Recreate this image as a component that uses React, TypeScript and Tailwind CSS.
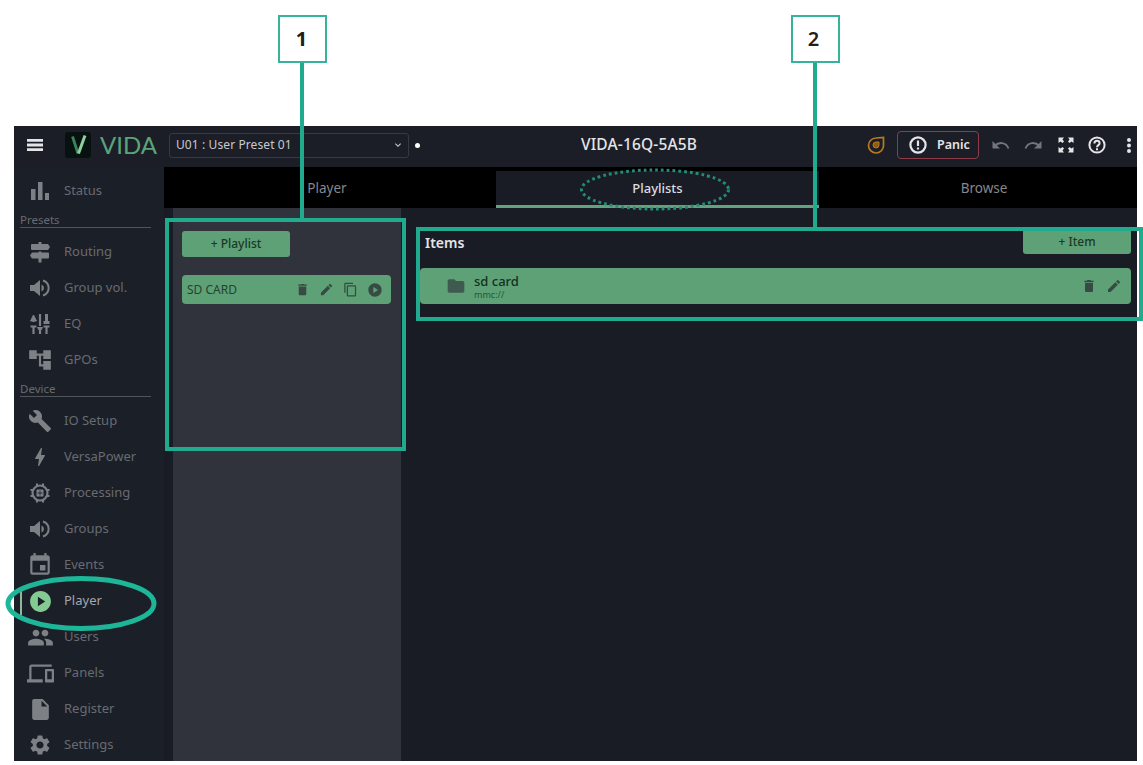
import type { ReactNode } from "react";
import clsx from "clsx";
import {
  MdAccountTree,
  MdBolt,
  MdBuild,
  MdContentCopy,
  MdCreate,
  MdDelete,
  MdDevices,
  MdEvent,
  MdExpandMore,
  MdFolder,
  MdInsertDriveFile,
  MdPeople,
  MdPlayCircle,
  MdSettings,
} from "react-icons/md";

type NavItem = { label: string; icon: ReactNode; active?: boolean };

function BarsIcon() {
  return (
    <svg viewBox="0 0 20 20" className="size-5" fill="currentColor">
      <path d="M1 8h4.500v11H1zM8 1h4.500v18H8zM15 12h4v7h-4z" />
    </svg>
  );
}

function SignIcon() {
  return (
    <svg viewBox="0 0 24 24" className="size-6" fill="currentColor">
      <path d="M10.500 2h3v2H20l2 3-2 3H4a1 1 0 0 1-1-1V5a1 1 0 0 1 1-1h6.500zM10.500 11.500h3v1H20a1 1 0 0 1 1 1v4a1 1 0 0 1-1 1h-6.500v4h-3v-4H4l-2-3 2-3h6.500z" />
    </svg>
  );
}

function VolumeIcon() {
  return (
    <svg viewBox="0 0 20 20" className="size-5" fill="currentColor">
      <path d="M0 7v6h4l6 5V2L4 7z" />
      <path d="M11.500 6.500c3.200 1.500 3.200 5.500 0 7z" />
      <path d="M13 2.500c7.500 2.500 7.500 12.500 0 15" fill="none" stroke="currentColor" strokeWidth="2" />
    </svg>
  );
}

function SlidersIcon() {
  return (
    <svg viewBox="0 0 24 24" className="size-6" fill="none" stroke="currentColor" strokeWidth="2.200">
      <path d="M5.500 7v3M5.500 14v8M12 2v12M12 19v3M18.500 2v8M18.500 15v7M2.500 14.500h6M15.500 14.500h6" />
      <path d="M5.500 3l3 6h-6zM9.500 15.500h5l-2.500 4z" fill="currentColor" strokeWidth="1" />
      <path d="M18.500 2v9M15.500 10.500h6" strokeWidth="3" />
    </svg>
  );
}

function ChipIcon() {
  return (
    <svg viewBox="0 0 22 22" className="size-[22px]" fill="none" stroke="currentColor" strokeWidth="2.200">
      <circle cx="11" cy="11" r="7.500" />
      <path d="M8 1.500v3M14 1.500v3M8 17.500v3M14 17.500v3M1.500 8h3M1.500 14h3M17.500 8h3M17.500 14h3" />
      <rect x="7.500" y="7.500" width="7" height="7" rx="0.500" fill="currentColor" stroke="none" />
      <path d="M11 8.500v5M8.500 11h5" stroke="#1b1f28" strokeWidth="0.800" />
    </svg>
  );
}

function LogoMark() {
  return (
    <svg viewBox="0 0 26 26" className="size-[26px]">
      <rect width="26" height="26" rx="3" fill="#07110f" />
      <path d="M7.500 4.500l5.500 17" stroke="#3c8460" strokeWidth="2.800" />
      <path d="M20 3.500l-6.500 18" stroke="#8cd0a0" strokeWidth="3" />
    </svg>
  );
}

function MenuIcon() {
  return (
    <svg viewBox="0 0 16 12" className="h-3 w-4" fill="currentColor">
      <path d="M0 0h16v2.800H0zM0 4.600h16v2.800H0zM0 9.200h16V12H0z" />
    </svg>
  );
}

function LinkIcon() {
  return (
    <svg viewBox="0 0 18 18" className="size-[18px]" fill="none" stroke="#b97b1d" strokeWidth="1.700">
      <path d="M16.500 1.500v7.500a7.500 7.500 0 1 1-7.500-7zM9 2l7.500-.5" />
      <path d="M12 6v3A3 3 0 1 1 9 6z" fill="#8c5c1a" strokeWidth="1" />
    </svg>
  );
}

function AlertIcon() {
  return (
    <svg viewBox="0 0 20 20" className="size-5" fill="none" stroke="currentColor" strokeWidth="2.200">
      <circle cx="10" cy="10" r="7.600" />
      <path d="M10 5.500v5.500M10 12.500v2" />
    </svg>
  );
}

function HelpIcon() {
  return (
    <svg viewBox="0 0 20 20" className="size-5" fill="none" stroke="currentColor" strokeWidth="2">
      <circle cx="10" cy="10" r="7.600" />
      <path d="M7.400 8.400c0-3.600 5.200-3.400 5.200-.2 0 1.900-2.600 1.900-2.600 4M10 13.300v1.900" />
    </svg>
  );
}

function UndoIcon() {
  return (
    <svg viewBox="0 0 18 10" className="h-[10px] w-[18px]" fill="none" stroke="#72757b" strokeWidth="2">
      <path d="M2.500 6C7 1.500 14 2 16.500 8.500" />
      <path d="M0.500 1v7.500H8z" fill="#72757b" stroke="none" />
    </svg>
  );
}

function FullscreenIcon() {
  return (
    <svg viewBox="0 0 18 18" className="size-[18px]" fill="#e4e5e8">
      <path d="M1.500 1.500h5.500L5.500 3.500 7 5.500 5.500 7 3.500 5.500l-2 1.500zM16.500 1.500H11l1.500 2L11 5.500 12.500 7l2-1.500 2 1.500zM1.500 16.500h5.500l-1.500-2L7 12.500 5.500 11l-2 1.500-2-1.500zM16.500 16.500H11l1.500-2-1.500-2 1.500-1.500 2 1.500 2-1.500z" />
    </svg>
  );
}

function MoreIcon() {
  return (
    <svg viewBox="0 0 4 15" className="h-[15px] w-1 shrink-0" fill="currentColor">
      <circle cx="2" cy="2" r="2" />
      <circle cx="2" cy="7.500" r="2" />
      <circle cx="2" cy="13" r="2" />
    </svg>
  );
}

const statusNav: NavItem[] = [{ label: "Status", icon: <BarsIcon /> }];

const presetNav: NavItem[] = [
  { label: "Routing", icon: <SignIcon /> },
  { label: "Group vol.", icon: <VolumeIcon /> },
  { label: "EQ", icon: <SlidersIcon /> },
  { label: "GPOs", icon: <MdAccountTree className="size-[26px]" /> },
];

const deviceNav: NavItem[] = [
  { label: "IO Setup", icon: <MdBuild className="size-6" /> },
  { label: "VersaPower", icon: <MdBolt className="size-6" /> },
  { label: "Processing", icon: <ChipIcon /> },
  { label: "Groups", icon: <VolumeIcon /> },
  { label: "Events", icon: <MdEvent className="size-[26px]" /> },
  { label: "Player", icon: <MdPlayCircle className="size-[25px]" />, active: true },
  { label: "Users", icon: <MdPeople className="size-[27px]" /> },
  { label: "Panels", icon: <MdDevices className="size-[27px]" /> },
  { label: "Register", icon: <MdInsertDriveFile className="size-[25px]" /> },
  { label: "Settings", icon: <MdSettings className="size-6" /> },
];

function NavList({ items }: { items: NavItem[] }) {
  return (
    <>
      {items.map((item) => (
        <div
          key={item.label}
          className={clsx(
            "flex h-9 shrink-0 items-center text-[13px]",
            item.active ? "text-[#a3a6ab]" : "text-[#686b71]",
          )}
        >
          <span className={clsx("ml-1.5 h-7 w-0.5", item.active && "bg-[#8fb79c]")} />
          <span
            className={clsx(
              "flex w-9 justify-center",
              item.active ? "text-[#83cb92]" : "text-[#7d8085]",
            )}
          >
            {item.icon}
          </span>
          <span className="ml-1.5">{item.label}</span>
        </div>
      ))}
    </>
  );
}

function NavHeading({ children }: { children: ReactNode }) {
  return (
    <div className="h-[25px] shrink-0 pl-1.5">
      <div className="h-[19px] w-[131px] border-b border-[#51545b] pt-1 text-[11.500px] leading-[14px] text-[#686b71]">
        {children}
      </div>
    </div>
  );
}

function Header() {
  return (
    <header className="flex h-[41px] shrink-0 items-center bg-[#1b1e26] pb-[3px] text-[#e4e5e8]">
      <div className="flex w-[411px] items-center">
        <div className="ml-[13px]">
          <MenuIcon />
        </div>
        <div className="ml-[22px]">
          <LogoMark />
        </div>
        <span className="ml-[9px] w-[60px] font-['Lato'] text-[24px] leading-6 text-[#5aa47b]">VIDA</span>
        <div className="ml-[9px] flex h-[25px] w-[240px] items-center justify-between rounded-[3px] border border-[#363941] pr-1 pl-1.5 text-[12px] tracking-[0.1px] text-[#c8cacf]">
          <span>U01 : User Preset 01</span>
          <MdExpandMore className="size-3" />
        </div>
        <span className="ml-[6px] size-[5px] rounded-full bg-white" />
      </div>
      <div className="flex-1 text-center text-[15.500px] font-medium tracking-[0.15px]">VIDA-16Q-5A5B</div>
      <div className="flex w-[284px] items-center">
        <div className="ml-[14px]">
          <LinkIcon />
        </div>
        <button className="ml-3 flex h-7 w-[82px] items-center rounded-[4px] border border-[#8d3c48] pl-[10px] text-[12.500px] font-semibold">
          <AlertIcon />
          <span className="ml-[9px]">Panic</span>
        </button>
        <div className="ml-[13px]">
          <UndoIcon />
        </div>
        <div className="ml-[14px] -scale-x-100">
          <UndoIcon />
        </div>
        <div className="ml-[15px]">
          <FullscreenIcon />
        </div>
        <div className="ml-[12px]">
          <HelpIcon />
        </div>
        <div className="ml-[20px]">
          <MoreIcon />
        </div>
      </div>
    </header>
  );
}

function Tabs() {
  return (
    <div className="flex h-[41px] shrink-0 bg-black pt-1 text-[13.500px] text-[#85878b]">
      <div className="w-[332px] pt-1.5 pr-1.5 text-center leading-[22px]">Player</div>
      <div className="w-[323px] border-b-[3px] border-[#62a27e] bg-[#191c25] pt-1.5 text-center text-[13px] leading-[22px] font-medium text-[#dcdde0]">
        Playlists
      </div>
      <div className="flex-1 pt-1.5 pl-3 text-center leading-[22px]">Browse</div>
    </div>
  );
}

function PlaylistPanel() {
  return (
    <section className="ml-[9px] w-[228px] shrink-0 bg-[#30333b] pt-[23px] pl-[9px]">
      <button className="block h-[26px] w-[108px] rounded-[3px] bg-[#5ea176] text-[12px] font-medium text-[#1b3828]">
        + Playlist
      </button>
      <div className="mt-[18px] flex h-[29px] w-[209px] items-center rounded-[4px] bg-[#5ea176] pl-[5px] text-[12px] text-[#24432f]">
        <span className="w-[108px]">SD CARD</span>
        <div className="flex items-center gap-[9px] text-[#374b44]">
          <MdDelete className="size-[15px]" />
          <MdCreate className="size-[15px]" />
          <MdContentCopy className="size-[15px]" />
          <MdPlayCircle className="size-[16px]" />
        </div>
      </div>
    </section>
  );
}

function ItemsPanel() {
  return (
    <section className="flex-1 pt-[21px] pr-1.5 pl-[19px]">
      <div className="flex items-start justify-between">
        <h2 className="pt-1 pl-[5px] text-[14px] leading-5 font-semibold text-[#e4e5e8]">Items</h2>
        <button className="h-[25px] w-[108px] rounded-[3px] bg-[#5ea176] text-[12px] font-medium text-[#1b3828]">
          + Item
        </button>
      </div>
      <div className="mt-[14px] flex h-9 items-center rounded-[4px] bg-[#5ea176] pr-[9px] pl-[26px] text-[#374b44]">
        <MdFolder className="size-5 text-[#405a50]" />
        <div className="ml-[8px] flex-1">
          <div className="text-[13px] leading-4 font-medium text-[#14301f]">sd card</div>
          <div className="text-[9px] leading-[11px] text-[#24583a]">mmc://</div>
        </div>
        <MdDelete className="size-[16px]" />
        <MdCreate className="ml-[9px] size-[16px]" />
      </div>
    </section>
  );
}

function Annotations() {
  return (
    <>
      <div className="absolute top-[218px] left-[165px] h-[233px] w-[241px] border-4 border-[#20aa8e]" />
      <div className="absolute top-[227px] left-[416px] h-[94px] w-[727px] border-4 border-[#20aa8e]" />
      <div className="absolute top-[62px] left-[300px] h-[158px] w-1 bg-[#20aa8e]" />
      <div className="absolute top-[62px] left-[813px] h-[167px] w-1 bg-[#20aa8e]" />
      <div className="absolute top-[15px] left-[278px] flex h-[48px] w-[49px] items-center justify-center border-2 border-[#38b39b] bg-white pr-0.5 font-['Noto_Sans'] text-[20px] font-bold text-[#202020]">
        1
      </div>
      <div className="absolute top-[15px] left-[791px] flex h-[48px] w-[49px] items-center justify-center border-2 border-[#38b39b] bg-white pr-1 font-['Noto_Sans'] text-[20px] font-semibold text-[#202020]">
        2
      </div>
      <svg className="absolute top-0 left-0" width="1143" height="765" fill="none">
        <ellipse cx="81" cy="603.500" rx="73" ry="25" stroke="#1db699" strokeWidth="5" />
        <ellipse
          cx="655"
          cy="189.500"
          rx="73.500"
          ry="19.500"
          stroke="#258b76"
          strokeWidth="3"
          strokeDasharray="2.800 3"
        />
      </svg>
    </>
  );
}

export default function App() {
  return (
    <div className="relative h-[765px] w-[1143px] overflow-hidden bg-white pt-[126px] pl-[14px] font-['Noto_Sans',sans-serif]">
      <div className="flex h-[635px] w-[1123px] flex-col overflow-hidden bg-[#191c25]">
        <Header />
        <div className="flex min-h-0 flex-1">
          <nav className="flex w-[150px] shrink-0 flex-col overflow-hidden bg-[#1b1f28] pt-1.5">
            <NavList items={statusNav} />
            <NavHeading>Presets</NavHeading>
            <NavList items={presetNav} />
            <NavHeading>Device</NavHeading>
            <NavList items={deviceNav} />
          </nav>
          <main className="flex flex-1 flex-col">
            <Tabs />
            <div className="flex flex-1">
              <PlaylistPanel />
              <ItemsPanel />
            </div>
          </main>
        </div>
      </div>
      <Annotations />
    </div>
  );
}
